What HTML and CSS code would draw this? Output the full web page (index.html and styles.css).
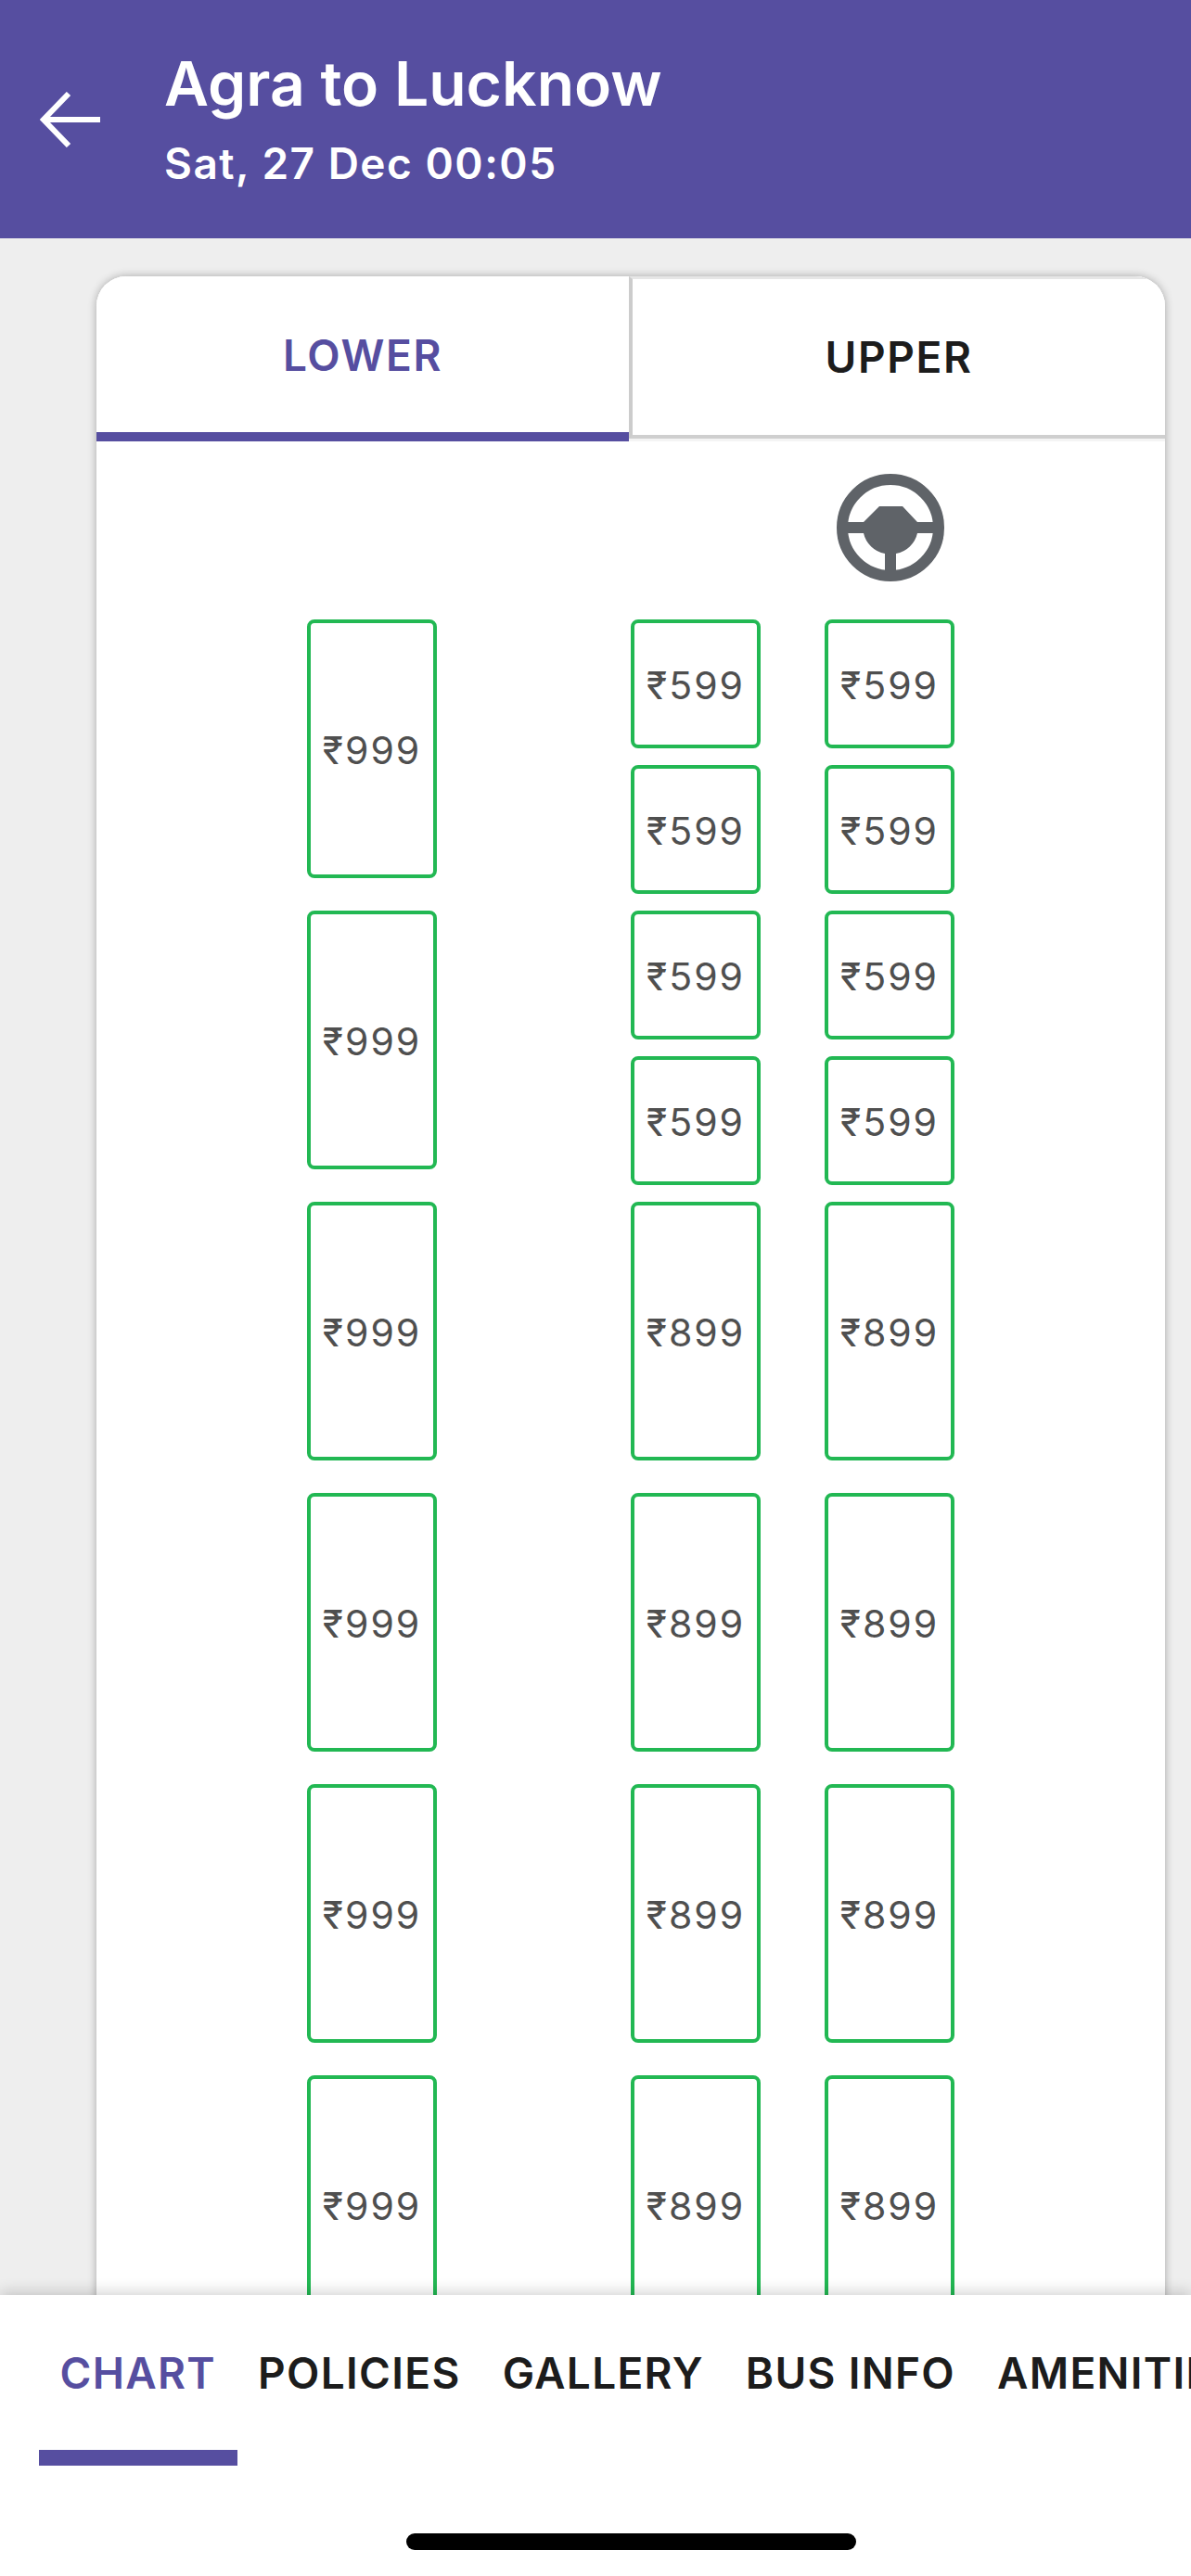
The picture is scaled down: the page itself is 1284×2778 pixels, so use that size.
FILE: index.html
```html
<!DOCTYPE html>
<html lang="en">
<head>
    <meta charset="UTF-8">
    <meta name="viewport" content="width=device-width, initial-scale=1.0">
    <title>Agra to Lucknow</title>
    <link rel="stylesheet" href="styles.css">
</head>
<body>
    <header class="topbar">
        <svg class="back-icon" viewBox="0 0 65 60" aria-hidden="true">
            <path d="M65 30H5M31 2L4 30L31 58" fill="none" stroke="#fff" stroke-width="6"/>
        </svg>
        <div class="route">
            <h1 class="route-title">Agra to Lucknow</h1>
            <p class="route-date">Sat, 27 Dec 00:05</p>
        </div>
    </header>

    <main class="content">
        <section class="card">
            <div class="deck-tabs">
                <div class="deck-tab deck-tab-active">LOWER</div>
                <div class="deck-tab">UPPER</div>
            </div>

            <svg class="wheel" viewBox="0 0 116 116" aria-hidden="true">
                <circle cx="58" cy="58" r="52" fill="none" stroke="#5f6368" stroke-width="12"/>
                <path fill="#5f6368" d="M46 35H71L87 52H108V64H87A29 29 0 0 1 64 86V108H52V86A29 29 0 0 1 29 64H8V52H29Z"/>
            </svg>

            <div class="seats">
                <div class="seat seat-tall">₹999</div>
                <div class="seat">₹599</div>
                <div class="seat">₹599</div>
                <div class="seat">₹599</div>
                <div class="seat">₹599</div>

                <div class="seat seat-tall">₹999</div>
                <div class="seat">₹599</div>
                <div class="seat">₹599</div>
                <div class="seat">₹599</div>
                <div class="seat">₹599</div>

                <div class="seat seat-tall">₹999</div>
                <div class="seat seat-tall">₹899</div>
                <div class="seat seat-tall">₹899</div>

                <div class="seat seat-tall">₹999</div>
                <div class="seat seat-tall">₹899</div>
                <div class="seat seat-tall">₹899</div>

                <div class="seat seat-tall">₹999</div>
                <div class="seat seat-tall">₹899</div>
                <div class="seat seat-tall">₹899</div>

                <div class="seat seat-tall">₹999</div>
                <div class="seat seat-tall">₹899</div>
                <div class="seat seat-tall">₹899</div>
            </div>
        </section>
    </main>

    <footer class="bottom">
        <nav class="bottom-tabs">
            <div class="bottom-tab bottom-tab-active">CHART</div>
            <div class="bottom-tab">POLICIES</div>
            <div class="bottom-tab">GALLERY</div>
            <div class="bottom-tab">BUS INFO</div>
            <div class="bottom-tab">AMENITIES</div>
        </nav>
        <div class="home-bar"></div>
    </footer>
</body>
</html>
```

FILE: styles.css
```css
html, body {
    margin: 0;
    padding: 0;
}

body {
    width: 1284px;
    height: 2778px;
    overflow: hidden;
    display: flex;
    flex-direction: column;
    background-color: #eeeeee;
    font-family: Inter, "Noto Sans", sans-serif;
    color: #1c1c1c;
}

.topbar {
    flex: none;
    height: 257px;
    box-sizing: border-box;
    padding: 0 0 0 43px;
    display: flex;
    align-items: center;
    background-color: #564ea0;
    color: #ffffff;
}

.back-icon {
    flex: none;
    width: 65px;
    height: 60px;
    margin-right: 69px;
}

.route-title {
    margin: -4px 0 0;
    font-size: 66px;
    line-height: 80px;
    font-weight: 600;
}

.route-date {
    margin: 18px 0 0;
    font-size: 46px;
    line-height: 56px;
    font-weight: 600;
    letter-spacing: 1.5px;
}

.content {
    flex: 1;
    min-height: 0;
    overflow: hidden;
    padding: 41px 28px 0 104px;
}

.card {
    background-color: #ffffff;
    border-radius: 32px 32px 0 0;
    box-shadow: 0 0 10px rgba(0, 0, 0, 0.3);
    overflow: hidden;
}

.deck-tabs {
    display: flex;
    height: 178px;
    background-color: #f4f4f4;
}

.deck-tab {
    flex: 1;
    box-sizing: border-box;
    display: flex;
    align-items: center;
    justify-content: center;
    height: 175px;
    font-size: 46px;
    font-weight: 600;
    letter-spacing: 1.6px;
    background-color: #ffffff;
    border-top: 3px solid #e6e6e6;
    border-left: 4px solid #cccccc;
    border-bottom: 4px solid #cfcfcf;
}

.deck-tab-active {
    height: 178px;
    color: #564ea0;
    border-top: none;
    border-left: none;
    border-bottom: 10px solid #564ea0;
    padding-top: 1px;
}

.wheel {
    display: block;
    width: 116px;
    height: 116px;
    margin: 35px 0 41px 798px;
}

.seats {
    display: grid;
    grid-template-columns: 349px 209px 140px;
    grid-auto-rows: 138px;
    row-gap: 19px;
    padding-left: 227px;
}

.seat {
    box-sizing: border-box;
    width: 140px;
    height: 139px;
    display: flex;
    align-items: center;
    justify-content: center;
    padding-top: 3px;
    border: 4px solid #22b853;
    border-radius: 8px;
    font-size: 41px;
    letter-spacing: 2px;
    color: #4f4f4f;
}

.seat-tall {
    grid-row: span 2;
    height: 279px;
}

.bottom {
    flex: none;
    position: relative;
    height: 303px;
    background-color: #ffffff;
    box-shadow: 0 -4px 14px rgba(0, 0, 0, 0.16);
}

.bottom-tabs {
    display: flex;
    padding-left: 42px;
    overflow: hidden;
}

.bottom-tab {
    flex: none;
    padding: 56px 22.5px 72px;
    font-size: 46px;
    line-height: 56px;
    font-weight: 600;
    letter-spacing: 1.3px;
    white-space: nowrap;
}

.bottom-tab-active {
    color: #564ea0;
    padding-bottom: 55px;
    border-bottom: 17px solid #564ea0;
}

.home-bar {
    width: 485px;
    height: 18px;
    margin: 73px 0 0 438px;
    border-radius: 9px;
    background-color: #000000;
}
```
